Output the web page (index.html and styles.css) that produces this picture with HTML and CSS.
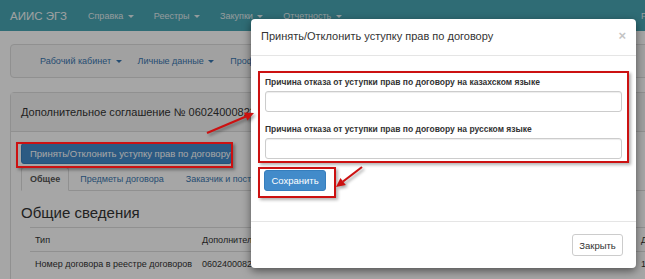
FILE: index.html
```html
<!DOCTYPE html>
<html lang="ru">
<head>
<meta charset="utf-8">
<title>АИИС ЭГЗ</title>
<link rel="stylesheet" href="styles.css">
</head>
<body>
<header class="navbar">
  <span class="brand">АИИС ЭГЗ</span>
  <nav class="menu">
    <span class="menu-item">Справка <i class="caret"></i></span>
    <span class="menu-item">Реестры <i class="caret"></i></span>
    <span class="menu-item">Закупки <i class="caret"></i></span>
    <span class="menu-item">Отчетность <i class="caret"></i></span>
  </nav>
  <span class="menu-item">Русский</span>
</header>

<main class="container">
  <div class="subnav">
    <span class="sub-item">Рабочий кабинет <i class="caret"></i></span>
    <span class="sub-item">Личные данные <i class="caret"></i></span>
    <span class="sub-item">Профиль участника <i class="caret"></i></span>
  </div>

  <section class="panel">
    <div class="panel-heading">Дополнительное соглашение № 06024000823 от 10.11.2016</div>
    <div class="panel-body">
      <div class="actions">
        <span class="mark"><button class="btn btn-primary btn-action">Принять/Отклонить уступку прав по договору</button></span>
      </div>
      <ul class="tabs">
        <li class="tab active">Общее</li>
        <li class="tab">Предметы договора</li>
        <li class="tab">Заказчик и поставщик</li>
        <li class="tab">Условия оплаты</li>
        <li class="tab">Платежи</li>
      </ul>
      <h3 class="section-title">Общие сведения</h3>
      <table class="info">
        <tr><td class="c1">Тип</td><td class="c2">Дополнительное соглашение</td><td>Дни</td></tr>
        <tr><td class="c1">Номер договора в реестре договоров</td><td class="c2">06024000823</td><td>110</td></tr>
      </table>
    </div>
  </section>
</main>

<div class="backdrop"></div>

<div class="modal">
  <div class="modal-header">
    <span class="modal-title">Принять/Отклонить уступку прав по договору</span>
    <span class="close">×</span>
  </div>
  <div class="modal-body">
    <div class="frame group-frame">
      <label class="field-label">Причина отказа от уступки прав по договору на казахском языке</label>
      <input class="field" type="text">
      <label class="field-label second">Причина отказа от уступки прав по договору на русском языке</label>
      <input class="field" type="text">
    </div>
    <div class="frame save-frame">
      <button class="btn btn-primary btn-save">Сохранить</button>
    </div>
  </div>
  <div class="modal-footer">
    <button class="btn btn-default">Закрыть</button>
  </div>
</div>

<svg class="arrows" width="645" height="279" viewBox="0 0 645 279">
  <line x1="207" y1="133" x2="246" y2="116.5" />
  <polygon points="254,113 247.5,120.6 243.9,112.4" />
  <line x1="362" y1="167" x2="343" y2="181.5" />
  <polygon points="336,187 345.8,185.1 340.4,177.9" />
</svg>
</body>
</html>
```

FILE: styles.css
```css
* { box-sizing: border-box; }
html, body { margin: 0; padding: 0; }
body {
  width: 645px;
  height: 279px;
  overflow: hidden;
  position: relative;
  background: #fff;
  color: #333;
  font-family: "Liberation Sans", Arial, sans-serif;
  font-size: 9px;
}

/* top navbar */
.navbar {
  height: 31px;
  width: 720px;
  background: #49a6b4;
  display: grid;
  grid-template-columns: 78px 553px auto;
  align-items: center;
  padding-left: 10px;
  white-space: nowrap;
}
.brand { font-size: 11.5px; color: #f4f8f8; }
.menu { display: flex; gap: 20px; }
.menu-item { color: #e2eef0; font-size: 9px; }
.caret {
  display: inline-block;
  width: 0; height: 0;
  margin-left: 2px;
  vertical-align: middle;
  border-top: 3px solid;
  border-left: 3px solid transparent;
  border-right: 3px solid transparent;
}

.container { width: 720px; padding-left: 10px; }

.subnav {
  margin-top: 13px;
  height: 34px;
  border: 1px solid #ddd;
  border-radius: 4px;
  background: #f8f8f8;
  display: flex;
  align-items: center;
  gap: 16px;
  padding-left: 29px;
  white-space: nowrap;
}
.sub-item { color: #3a77b0; font-size: 9px; }

.panel {
  margin-top: 14px;
  border: 1px solid #ddd;
  border-radius: 4px 4px 0 0;
  height: 200px;
}
.panel-heading {
  height: 39px;
  background: #f5f5f5;
  border-bottom: 1px solid #ddd;
  display: flex;
  align-items: center;
  padding-left: 10px;
  font-size: 11px;
  color: #333;
  white-space: nowrap;
}
.panel-body { padding: 11px 0 0 10px; }

.btn {
  font-family: inherit;
  font-size: 9.5px;
  border-radius: 3px;
  border: 1px solid transparent;
  height: 21px;
  padding: 0 8px;
  line-height: 19px;
  cursor: pointer;
  white-space: nowrap;
}
.btn-primary { background: #428bca; border-color: #357ebd; color: #fff; }
.btn-default { background: #fff; border-color: #ccc; color: #333; }
.btn-action { display: block; width: 211px; }

.actions { display: flex; }
.mark { position: relative; display: block; }
.mark::after {
  content: "";
  position: absolute;
  left: -5px; top: -1px; right: -1px; bottom: -4px;
  border: 2px solid #cc1111;
  box-shadow: 2px 2px 3px rgba(0,0,0,0.35);
  z-index: 30;
}

.tabs {
  list-style: none;
  margin: 3px 0 0 0;
  padding: 0;
  display: flex;
  border-bottom: 1px solid #ddd;
  white-space: nowrap;
}
.tab {
  height: 24px;
  line-height: 23px;
  padding: 0 10px;
  margin-bottom: -1px;
  color: #3a77b0;
  font-size: 9px;
  border: 1px solid transparent;
  border-radius: 3px 3px 0 0;
}
.tab.active {
  padding: 0 8px;
  color: #555;
  font-weight: bold;
  background: #fff;
  border-color: #ddd #ddd transparent;
}

.section-title {
  margin: 14px 0 6px 0;
  font-size: 15px;
  font-weight: normal;
  line-height: 16px;
  color: #333;
}

.info {
  margin-left: 9px;
  border-collapse: collapse;
  font-size: 9px;
  color: #333;
  white-space: nowrap;
}
.info td {
  height: 24px;
  padding: 0 5px;
  border-top: 1px solid #ddd;
  vertical-align: middle;
}
.info .c1 { width: 163px; }
.info .c2 { width: 439px; }

.backdrop {
  position: absolute;
  inset: 0;
  background: rgba(0,0,0,0.35);
  z-index: 10;
}

/* modal */
.modal {
  position: absolute;
  left: 251px;
  top: 19px;
  width: 385px;
  height: 249px;
  background: #fff;
  border-radius: 4px;
  box-shadow: 0 3px 9px rgba(0,0,0,0.5);
  z-index: 20;
  display: flex;
  flex-direction: column;
}
.modal-header {
  height: 37px;
  border-bottom: 1px solid #e5e5e5;
  display: flex;
  align-items: center;
  justify-content: space-between;
  padding: 0 10px 2px 10px;
}
.modal-title { font-size: 11px; color: #333; white-space: nowrap; }
.close { font-size: 13px; font-weight: bold; color: #c4c4c4; margin-top: -2px; }

.modal-body {
  flex: 1;
  padding: 15px 7px 0 7px;
}
.frame {
  border: 2px solid #cc1111;
  box-shadow: 2px 2px 3px rgba(0,0,0,0.3);
}
.group-frame { padding: 3px 5px 2px 5px; }
.field-label {
  display: block;
  font-weight: bold;
  font-size: 8.5px;
  line-height: 12px;
  color: #333;
  white-space: nowrap;
  margin-bottom: 3px;
}
.field-label.second { margin-top: 11px; }
.field {
  display: block;
  width: 100%;
  height: 21px;
  border: 1px solid #ccc;
  border-radius: 3px;
  box-shadow: inset 0 1px 1px rgba(0,0,0,0.075);
  background: #fff;
}
.save-frame {
  display: inline-block;
  margin-top: 4px;
  padding: 1px 8px 5px 4px;
}
.btn-save { display: block; width: 62px; padding: 0; }

.modal-footer {
  border-top: 1px solid #e5e5e5;
  padding: 12px 13px 12px 0;
  display: flex;
  justify-content: flex-end;
}
.modal-footer .btn { width: 51px; height: 22px; padding: 0; }

.arrows {
  position: absolute;
  left: 0; top: 0;
  z-index: 30;
  pointer-events: none;
  filter: drop-shadow(2px 2px 1.5px rgba(0,0,0,0.35));
}
.arrows line { stroke: #cc1111; stroke-width: 2.2; }
.arrows polygon { fill: #cc1111; }
```
